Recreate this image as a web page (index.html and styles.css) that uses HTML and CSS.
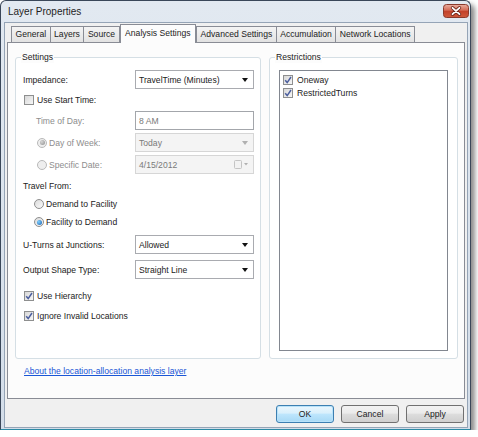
FILE: index.html
```html
<!DOCTYPE html>
<html>
<head>
<meta charset="utf-8">
<link rel="stylesheet" href="styles.css">
</head>
<body>
<div class="window">
  <div class="titlebar">
    <span class="title">Layer Properties</span>
    <div class="close">
      <svg width="26" height="14" viewBox="0 0 26 14">
        <defs>
          <linearGradient id="cg" x1="0" y1="0" x2="0" y2="1">
            <stop offset="0" stop-color="#eab0a2"/>
            <stop offset="0.45" stop-color="#d46a55"/>
            <stop offset="0.5" stop-color="#c2412a"/>
            <stop offset="1" stop-color="#cf5a3c"/>
          </linearGradient>
        </defs>
        <rect x="0.5" y="0.5" width="25" height="13" rx="3" fill="url(#cg)" stroke="#8a3a2c"/>
        <path d="M9.5 3.8 L16.5 10.2 M16.5 3.8 L9.5 10.2" stroke="#6b2418" stroke-width="3.4" stroke-linecap="round"/>
        <path d="M9.5 3.8 L16.5 10.2 M16.5 3.8 L9.5 10.2" stroke="#ffffff" stroke-width="1.8" stroke-linecap="round"/>
      </svg>
    </div>
  </div>
  <div class="client">
    <div class="tabs">
      <div class="tab">General</div>
      <div class="tab">Layers</div>
      <div class="tab">Source</div>
      <div class="tab active">Analysis Settings</div>
      <div class="tab">Advanced Settings</div>
      <div class="tab">Accumulation</div>
      <div class="tab">Network Locations</div>
    </div>
    <div class="page">
      <div class="groups">
        <div class="group settings">
          <span class="group-title">Settings</span>
          <div class="stack stack-a">
            <div class="row">
              <span class="label">Impedance:</span>
              <div class="select"><span>TravelTime (Minutes)</span><span class="arrow"></span></div>
            </div>
            <div class="row short">
              <span class="check"><span class="cb"></span>Use Start Time:</span>
            </div>
            <div class="row">
              <span class="label disabled indent">Time of Day:</span>
              <div class="select input"><span>8 AM</span></div>
            </div>
            <div class="row">
              <span class="label disabled radio-label"><span class="rb sel off"></span>Day of Week:</span>
              <div class="select off"><span>Today</span><span class="arrow"></span></div>
            </div>
            <div class="row">
              <span class="label disabled radio-label"><span class="rb off"></span>Specific Date:</span>
              <div class="select off">
                <span>4/15/2012</span>
                <svg class="cal" width="15" height="9" viewBox="0 0 15 9">
                  <rect x="0.5" y="0.5" width="7" height="8" rx="1" fill="#f2f2f2" stroke="#c4c4c4"/>
                  <path d="M10 3 L14 3 L12 5.5 Z" fill="#b0b0b0"/>
                </svg>
              </div>
            </div>
          </div>
          <div class="stack travel">
            <div class="row short"><span class="label">Travel From:</span></div>
            <div class="row short"><span class="radio-opt"><span class="rb"></span>Demand to Facility</span></div>
            <div class="row short"><span class="radio-opt"><span class="rb sel"></span>Facility to Demand</span></div>
          </div>
          <div class="stack dropdowns">
            <div class="row">
              <span class="label">U-Turns at Junctions:</span>
              <div class="select"><span>Allowed</span><span class="arrow"></span></div>
            </div>
            <div class="row">
              <span class="label">Output Shape Type:</span>
              <div class="select"><span>Straight Line</span><span class="arrow"></span></div>
            </div>
          </div>
          <div class="stack options">
            <div class="row short">
              <span class="check"><span class="cb"><svg width="8" height="8" viewBox="0 0 8 8"><path d="M1.2 4.2 L3.2 6.6 L7 1" stroke="#4c5f9e" stroke-width="1.5" fill="none"/></svg></span>Use Hierarchy</span>
            </div>
            <div class="row short">
              <span class="check"><span class="cb"><svg width="8" height="8" viewBox="0 0 8 8"><path d="M1.2 4.2 L3.2 6.6 L7 1" stroke="#4c5f9e" stroke-width="1.5" fill="none"/></svg></span>Ignore Invalid Locations</span>
            </div>
          </div>
        </div>
        <div class="group restrictions">
          <span class="group-title">Restrictions</span>
          <div class="list">
            <div class="item"><span class="cb"><svg width="8" height="8" viewBox="0 0 8 8"><path d="M1.2 4.2 L3.2 6.6 L7 1" stroke="#4c5f9e" stroke-width="1.5" fill="none"/></svg></span>Oneway</div>
            <div class="item"><span class="cb"><svg width="8" height="8" viewBox="0 0 8 8"><path d="M1.2 4.2 L3.2 6.6 L7 1" stroke="#4c5f9e" stroke-width="1.5" fill="none"/></svg></span>RestrictedTurns</div>
          </div>
        </div>
      </div>
      <a class="link" href="#">About the location-allocation analysis layer</a>
    </div>
    <div class="buttons">
      <button class="btn default">OK</button>
      <button class="btn">Cancel</button>
      <button class="btn">Apply</button>
    </div>
  </div>
</div>
</body>
</html>
```
FILE: styles.css
```css
body {
  margin: 0;
  background: #ffffff;
  font-family: "Liberation Sans", Arial, sans-serif;
  font-size: 8.6px;
  color: #222222;
}

.window {
  width: 471px;
  height: 430px;
  box-sizing: border-box;
  border: 1px solid #3a4759;
  border-bottom-color: #2b8aa4;
  border-radius: 6px 6px 0 0;
  background: linear-gradient(#e2e9f1, #d3dde9);
  box-shadow: 4px 4px 5px rgba(0, 0, 0, 0.45);
  display: flex;
  flex-direction: column;
}

.titlebar {
  height: 21px;
  display: flex;
  align-items: flex-start;
  padding: 0 1px 0 7px;
}

.title {
  font-size: 10px;
  line-height: 12px;
  margin-top: 5px;
  color: #1e1e1e;
}

.close {
  margin-left: auto;
  margin-top: 3px;
  height: 14px;
}

.client {
  flex: 1;
  margin: 0 2px 1px 3px;
  border: 1px solid #95a4b6;
  background: #f0f0f0;
  display: flex;
  flex-direction: column;
  padding: 1px 2px 0 2px;
}

.tabs {
  display: flex;
  align-items: flex-end;
  padding-left: 4px;
}

.tab {
  height: 16px;
  box-sizing: border-box;
  border: 1px solid #898c95;
  border-bottom: none;
  padding: 0 3.5px;
  line-height: 15px;
  background: linear-gradient(#f4f4f4, #e2e2e2);
  margin-right: -1px;
  white-space: nowrap;
}

.tab.active {
  height: 19px;
  margin-bottom: -1px;
  margin-left: 1px;
  margin-right: 0;
  padding: 0 4.5px;
  line-height: 17px;
  background: #fcfcfc;
  position: relative;
  z-index: 1;
}

.page {
  height: 357px;
  box-sizing: border-box;
  border: 1px solid #898c95;
  background: #fcfcfc;
  padding: 14px 6px 0 7px;
}

.groups {
  display: flex;
  gap: 8px;
  height: 302px;
}

.group {
  position: relative;
  box-sizing: border-box;
  border: 1px solid #d5dfe5;
  border-radius: 3px;
  background: #ffffff;
}

.group-title {
  position: absolute;
  top: -7px;
  left: 5px;
  padding: 0 1px;
  line-height: 12px;
  background: #fcfcfc;
}

.settings {
  width: 246px;
  padding: 12px 6px 0 7px;
}

.restrictions {
  flex: 1;
  display: flex;
  padding: 12px 9px 7px 9px;
}

.stack {
  display: flex;
  flex-direction: column;
}

.stack-a { gap: 3px; }
.travel { margin-top: 5px; gap: 3px; }
.dropdowns { margin-top: 6px; gap: 6px; }
.options { margin-top: 10px; gap: 5px; }

.row {
  display: flex;
  align-items: center;
  height: 19px;
}

.row.short { height: 14px; }
.row.short:nth-child(2) { height: 16px; }

.label {
  width: 112px;
  display: flex;
  align-items: center;
  white-space: nowrap;
}

.label.disabled { color: #8d8d8d; }
.label.indent { padding-left: 13px; box-sizing: border-box; }
.label.radio-label { padding-left: 14px; box-sizing: border-box; }

.select {
  width: 119px;
  height: 19px;
  box-sizing: border-box;
  border: 1px solid #a9abb0;
  background: #ffffff;
  display: flex;
  align-items: center;
  padding: 0 4px 0 3px;
}

.select.input { color: #7a7a7a; border-color: #a3a6ab; }

.select.off {
  background: #f4f4f4;
  border-color: #d6d6d6;
  color: #7a7a7a;
}

.arrow {
  margin-left: auto;
  margin-right: 1px;
  width: 0;
  height: 0;
  border-left: 3.5px solid transparent;
  border-right: 3.5px solid transparent;
  border-top: 4px solid #111111;
}

.select.off .arrow { border-top-color: #b0b0b0; }

.cal { margin-left: auto; }

.check {
  display: flex;
  align-items: center;
  padding-left: 1px;
}

.cb {
  width: 10px;
  height: 10px;
  box-sizing: border-box;
  border: 1px solid #8e8f8f;
  background: linear-gradient(135deg, #d8d8d8, #f6f6f6);
  margin-right: 3px;
  display: flex;
  align-items: center;
  justify-content: center;
}

.radio-opt {
  display: flex;
  align-items: center;
  padding-left: 11px;
}

.rb {
  width: 10px;
  height: 10px;
  box-sizing: border-box;
  border: 1px solid #8f8f8f;
  border-radius: 50%;
  background: linear-gradient(135deg, #dadada, #fbfbfb);
  margin-right: 2px;
  display: flex;
  align-items: center;
  justify-content: center;
}

.rb.off { border-color: #b9b9b9; background: #eeeeee; }

.rb.sel::after {
  content: "";
  width: 5px;
  height: 5px;
  border-radius: 50%;
  background: radial-gradient(circle at 35% 35%, #7ed0ff, #1a5fae);
}

.rb.sel.off::after {
  background: radial-gradient(circle at 35% 35%, #d6d6d6, #8d8d8d);
}

.list {
  flex: 1;
  border: 1px solid #828790;
  background: #ffffff;
  padding: 2px 0 0 3px;
}

.item {
  height: 13px;
  display: flex;
  align-items: center;
}

.item .cb { margin-right: 4px; }

.link {
  display: inline-block;
  margin: 6px 0 0 9px;
  line-height: 12px;
  color: #1a56d6;
  text-decoration: underline;
}

.buttons {
  display: flex;
  justify-content: flex-end;
  gap: 7px;
  margin-top: 6px;
  padding-right: 1px;
}

.btn {
  width: 58px;
  height: 18px;
  box-sizing: border-box;
  border: 1px solid #707070;
  border-radius: 3px;
  background: linear-gradient(#f2f2f2 0%, #ebebeb 45%, #dddddd 50%, #cfcfcf 100%);
  font-family: "Liberation Sans", Arial, sans-serif;
  font-size: 8.6px;
  color: #1b1b1b;
  padding: 0;
}

.btn.default {
  border-color: #3c7fb1;
  background: linear-gradient(#eaf6fd 0%, #d9f0fc 45%, #bee6fd 50%, #a7d9f5 100%);
  box-shadow: inset 0 0 0 1px #b8e2f9;
}
```
